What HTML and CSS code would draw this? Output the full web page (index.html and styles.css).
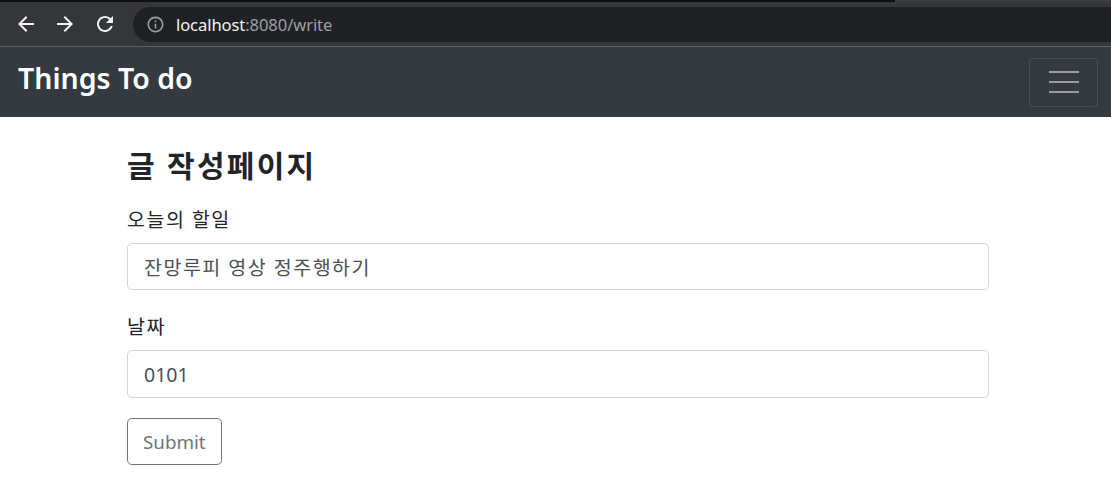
FILE: index.html
```html
<!DOCTYPE html>
<html lang="ko">
<head>
<meta charset="utf-8">
<title>Things To do</title>
<link rel="stylesheet" href="styles.css">
</head>
<body>
<div class="chrome">
  <div class="tabstrip"><div class="tabstrip-dark"></div></div>
  <div class="toolbar">
    <svg class="tb-icon" viewBox="0 0 24 24" width="24" height="24"><path d="M20 11H7.83l5.59-5.59L12 4l-8 8 8 8 1.41-1.41L7.83 13H20v-2z"/></svg>
    <svg class="tb-icon" viewBox="0 0 24 24" width="24" height="24"><path d="M12 4l-1.41 1.41L16.17 11H4v2h12.17l-5.58 5.59L12 20l8-8z"/></svg>
    <svg class="tb-icon reload" viewBox="0 0 24 24" width="24" height="24"><path d="M17.65 6.35C16.2 4.9 14.21 4 12 4c-4.42 0-7.99 3.58-7.99 8s3.57 8 7.99 8c3.73 0 6.84-2.55 7.73-6h-2.08c-.82 2.33-3.04 4-5.65 4-3.31 0-6-2.69-6-6s2.69-6 6-6c1.66 0 3.14.69 4.22 1.78L13 11h7V4l-2.35 2.35z"/></svg>
    <div class="omnibox">
      <svg class="info" viewBox="0 0 24 24" width="19" height="19"><path d="M11 7h2v2h-2zm0 4h2v6h-2zm1-9C6.48 2 2 6.48 2 12s4.48 10 10 10 10-4.48 10-10S17.52 2 12 2zm0 18c-4.41 0-8-3.59-8-8s3.59-8 8-8 8 3.59 8 8-3.59 8-8 8z"/></svg>
      <span class="url"><span class="host">localhost</span><span class="path">:8080/write</span></span>
    </div>
  </div>
</div>
<nav class="navbar">
  <span class="brand">Things To do</span>
  <button class="toggler" type="button" aria-label="Toggle navigation">
    <span class="bar"></span><span class="bar"></span><span class="bar"></span>
  </button>
</nav>
<main class="container">
  <h3 class="title">글 작성페이지</h3>
  <form class="form">
    <div class="group">
      <label class="label" for="todo">오늘의 할일</label>
      <input class="input input-ko" id="todo" type="text" value="잔망루피 영상 정주행하기">
    </div>
    <div class="group">
      <label class="label" for="date">날짜</label>
      <input class="input" id="date" type="text" value="0101">
    </div>
    <button class="submit" type="button">Submit</button>
  </form>
</main>
</body>
</html>
```
FILE: styles.css
```css
* { box-sizing: border-box; }
html, body { margin: 0; padding: 0; }
body {
  background: #fff;
  font-family: "Noto Sans", "Noto Sans CJK KR", sans-serif;
  color: #212529;
  overflow: hidden;
}

/* browser chrome */
.chrome { background: #35363a; }
.tabstrip { height: 2px; background: #3c3c3c; }
.tabstrip-dark { width: 895px; height: 2px; background: #0e0e0e; }
.toolbar {
  height: 45px;
  display: flex;
  align-items: center;
  gap: 15px;
  padding-left: 14px;
  border-bottom: 1px solid #5f6062;
  overflow: hidden;
}
.tb-icon { fill: #f1f3f4; flex: none; }
.reload { margin-left: 1px; }
.omnibox {
  flex: 1;
  margin-left: 1px;
  margin-right: -30px;
  height: 35px;
  border-radius: 18px;
  background: #202124;
  display: flex;
  align-items: center;
  padding-left: 13px;
  gap: 11px;
}
.info { fill: #9aa0a6; flex: none; }
.url { font-family: "Noto Sans", sans-serif; font-size: 16.6px; letter-spacing: -0.1px; }
.host { color: #f1f3f4; }
.path { color: #9aa0a6; }

/* navbar */
.navbar {
  height: 70px;
  background: #343a40;
  display: flex;
  align-items: center;
  justify-content: space-between;
  padding: 0 13px 0 18px;
}
.brand {
  color: #fff;
  font-family: "Noto Sans", sans-serif;
  font-weight: 600;
  font-size: 28.5px;
  line-height: 1;
  padding-bottom: 7px;
}
.toggler {
  width: 69px;
  height: 49px;
  background: transparent;
  border: 1px solid rgba(255, 255, 255, 0.1);
  border-radius: 4px;
  display: flex;
  flex-direction: column;
  align-items: center;
  justify-content: center;
  gap: 8px;
  padding: 0;
}
.bar {
  width: 30px;
  height: 2px;
  background: rgba(255, 255, 255, 0.5);
}

/* content */
.container {
  width: 862px;
  margin-left: 127px;
  padding-top: 32px;
}
.title {
  margin: 0 0 22px;
  font-size: 30px;
  line-height: 34px;
  font-weight: 700;
  letter-spacing: 2.3px;
  color: #212529;
}
.group { margin-bottom: 22px; }
.group + .group { margin-bottom: 21px; }
.label {
  display: block;
  font-size: 19.5px;
  line-height: 30px;
  margin-bottom: 8px;
  letter-spacing: 1.5px;
  color: #212529;
}
.input {
  display: block;
  width: 100%;
  height: 47px;
  padding: 0 16px;
  font-family: "Noto Sans", "Noto Sans CJK KR", sans-serif;
  font-size: 19.5px;
  color: #495057;
  background: #fff;
  border: 1px solid #ced4da;
  border-radius: 4.8px;
  outline: none;
}
.group + .group .input { height: 48px; }
.input-ko { letter-spacing: 1.5px; }
.submit {
  margin-top: -1px;
  height: 47px;
  padding: 0 15px;
  font-family: "Noto Sans", sans-serif;
  font-size: 18.8px;
  color: #6c757d;
  background: transparent;
  border: 1px solid #6c757d;
  border-radius: 4.8px;
}
```
